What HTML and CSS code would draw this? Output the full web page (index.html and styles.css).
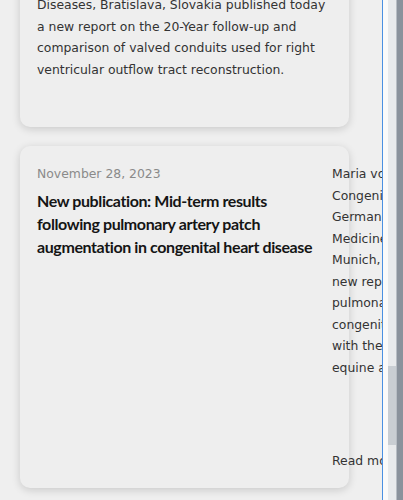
FILE: index.html
```html
<!DOCTYPE html>
<html lang="en">
<head>
<meta charset="utf-8">
<link rel="stylesheet" href="styles.css">
</head>
<body>
<div class="page">
  <main class="main">
    <div class="list">
      <article class="card card-top">
        <p class="excerpt">from the Children's Heart Centre, National Institute of Cardiovascular<br>Diseases, Bratislava, Slovakia published today<br>a new report on the 20-Year follow-up and<br>comparison of valved conduits used for right<br>ventricular outflow tract reconstruction.</p>
      </article>
      <article class="card card-post">
        <div class="post-head">
          <div class="date">November 28, 2023</div>
          <h2 class="title">New publication: Mid-term results following pulmonary artery patch augmentation in congenital heart disease</h2>
        </div>
        <div class="post-body">
          <p class="excerpt side">Maria von Stumm, Department of<br>Congenital Heart Disease and Pediatric<br>German Heart Center Munich, School of<br>Medicine, Technical University of<br>Munich, Germany published today a<br>new report on the mid-term results of<br>pulmonary artery patch augmentation in<br>congenital heart disease, comparing<br>with the results of bovine pericardium,<br>equine and autologous pericardium.</p>
          <a class="more">Read more</a>
        </div>
      </article>
    </div>
  </main>
  <div class="divider"></div>
  <div class="gutter"></div>
  <div class="track"><div class="thumb"></div></div>
  <div class="rail"></div>
</div>
</body>
</html>
```

FILE: styles.css
```css
html, body {
  margin: 0;
  padding: 0;
  width: 403px;
  height: 500px;
  overflow: hidden;
  background: #efefef;
}

.page {
  display: flex;
  height: 500px;
}

.main {
  width: 382px;
  flex-shrink: 0;
  overflow: hidden;
  background: #efefef;
}

.divider {
  width: 1px;
  flex-shrink: 0;
  background: #4a90e2;
}

.gutter {
  width: 5px;
  flex-shrink: 0;
  background: #fafafa;
}

.track {
  width: 8px;
  flex-shrink: 0;
  background: #e8eaec;
  display: flex;
  flex-direction: column;
  padding-top: 366px;
  box-sizing: border-box;
}

.thumb {
  height: 79px;
  background: #c9ced3;
}

.rail {
  width: 7px;
  flex-shrink: 0;
  background: #8a929c;
  border-left: 1px solid #b7bdc4;
  box-sizing: border-box;
}

.list {
  display: flex;
  flex-direction: column;
  gap: 19px;
  padding-left: 20px;
  margin-top: -73px;
}

.card {
  width: 329px;
  box-sizing: border-box;
  background: #eeeeee;
  border-radius: 10px;
  box-shadow: 0 2px 8px rgba(0, 0, 0, 0.16);
}

.card-top {
  height: 200px;
  display: flex;
  flex-direction: column;
  justify-content: flex-end;
  padding: 0 17px 47px;
}

.excerpt {
  margin: 0;
  font-family: "DejaVu Sans", sans-serif;
  font-size: 12.4px;
  line-height: 21.5px;
  color: #333333;
  white-space: nowrap;
}

.card-post {
  height: 342px;
  display: flex;
  gap: 15px;
  padding: 17px;
}

.post-head {
  width: 280px;
  flex-shrink: 0;
}

.date {
  font-family: "DejaVu Sans", sans-serif;
  font-size: 12.4px;
  line-height: 21.5px;
  color: #8a8a8a;
}

.title {
  margin: 4px 0 0;
  font-family: Lato, sans-serif;
  font-weight: 700;
  font-size: 16px;
  letter-spacing: -0.4px;
  line-height: 23px;
  color: #151515;
}

.post-body {
  width: 220px;
  flex-shrink: 0;
  display: flex;
  flex-direction: column;
}

.more {
  margin-top: auto;
  font-family: "DejaVu Sans", sans-serif;
  font-size: 12.4px;
  line-height: 21.5px;
  color: #333333;
}
```
